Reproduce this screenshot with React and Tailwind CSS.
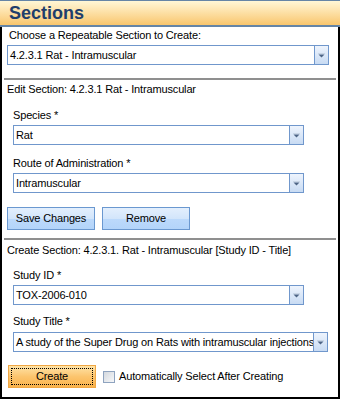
import React, { useState } from 'react';

const Combo = ({ value, className }) => (
  <div className={`flex h-[20px] border border-[#7097cc] bg-white ${className}`}>
    <div className="flex-1 overflow-hidden whitespace-nowrap pl-[2px] leading-[18px] text-black">{value}</div>
    <div className="flex w-[14px] items-center justify-center border-l border-[#7097cc] bg-gradient-to-b from-[#eef4fd] to-[#c8dbf3]">
      <svg width="7" height="5" viewBox="0 0 7 5">
        <rect x="0" y="0" width="7" height="1" fill="#c9d6e6" />
        <polygon points="0.5,1.5 6.5,1.5 3.5,4.5" fill="#4d6485" />
      </svg>
    </div>
  </div>
);

const Label = ({ children, className }) => (
  <div className={`h-[13px] leading-[13px] whitespace-nowrap text-black ${className}`}>{children}</div>
);

const BlueButton = ({ children, className }) => (
  <button className={`relative h-[23px] w-[88px] overflow-hidden border border-[#6a98d0] text-black ${className}`}>
    <span className="absolute inset-x-0 top-0 h-1/2 bg-gradient-to-b from-[#e3effd] to-[#d2e5fb]" />
    <span className="absolute inset-x-0 bottom-0 h-1/2 bg-gradient-to-b from-[#bcd9fb] to-[#b3d4fa]" />
    <span className="relative leading-[21px]">{children}</span>
  </button>
);

const App = () => {
  const [autoSelect, setAutoSelect] = useState(false);

  return (
    <div className="h-[399px] w-[340px] bg-white text-[11px] tracking-[-0.15px] font-['Liberation_Sans',Arial,sans-serif]">
      <div className="flex h-[27px] items-center border-t border-b-2 border-[#6585a6] bg-gradient-to-b from-[#fff7d6] to-[#f9c66c] pl-[9px]">
        <span className="text-[18px] font-bold leading-none tracking-normal text-[#1f3e6c]">Sections</span>
      </div>

      <div className="flex h-[372px] flex-col border-x-2 border-b-2 border-black">
        <Label className="mt-[2px] ml-[7px]">Choose a Repeatable Section to Create:</Label>
        <Combo value="4.2.3.1 Rat - Intramuscular" className="mt-[3px] ml-[5px] w-[322px]" />

        <div className="mt-[13px] ml-[2px] h-[2px] w-[332px] bg-[#8f8f8f]" />

        <Label className="mt-[3px] ml-[5px]">Edit Section: 4.2.3.1 Rat - Intramuscular</Label>
        <Label className="mt-[13px] ml-[11px]">Species *</Label>
        <Combo value="Rat" className="mt-[3px] ml-[11px] w-[291px]" />
        <Label className="mt-[12px] ml-[11px]">Route of Administration *</Label>
        <Combo value="Intramuscular" className="mt-[3px] ml-[11px] w-[291px]" />

        <div className="mt-[14px] ml-[5px] flex gap-[7px]">
          <BlueButton>Save Changes</BlueButton>
          <BlueButton>Remove</BlueButton>
        </div>

        <div className="mt-[8px] ml-[2px] h-[2px] w-[332px] bg-[#8f8f8f]" />

        <Label className="mt-[4px] ml-[5px]">Create Section: 4.2.3.1. Rat - Intramuscular [Study ID - Title]</Label>
        <Label className="mt-[12px] ml-[11px]">Study ID *</Label>
        <Combo value="TOX-2006-010" className="mt-[3px] ml-[11px] w-[291px]" />
        <Label className="mt-[10px] ml-[11px]">Study Title *</Label>
        <Combo value="A study of the Super Drug on Rats with intramuscular injections" className="mt-[4px] ml-[11px] w-[315px]" />

        <div className="mt-[13px] ml-[6px] flex items-center">
          <button className="h-[23px] w-[88px] border border-[#f0a745] bg-gradient-to-b from-[#fee3a6] via-[#fcc56e] to-[#fab24a] p-[2px] text-black">
            <span className="block h-full w-full border border-dotted border-black leading-[15px]">Create</span>
          </button>
          <label className="ml-[7px] flex items-center">
            <span
              onClick={() => setAutoSelect(!autoSelect)}
              className="flex h-[12px] w-[12px] items-center justify-center border border-[#8ea3bf] bg-gradient-to-br from-[#d3d8de] to-[#f6f7f9]"
            >
              {autoSelect && <span className="text-[9px] leading-none text-[#2a4a7a]">✓</span>}
            </span>
            <span className="ml-[4px] text-black">Automatically Select After Creating</span>
          </label>
        </div>
      </div>
    </div>
  );
};

export default App;
